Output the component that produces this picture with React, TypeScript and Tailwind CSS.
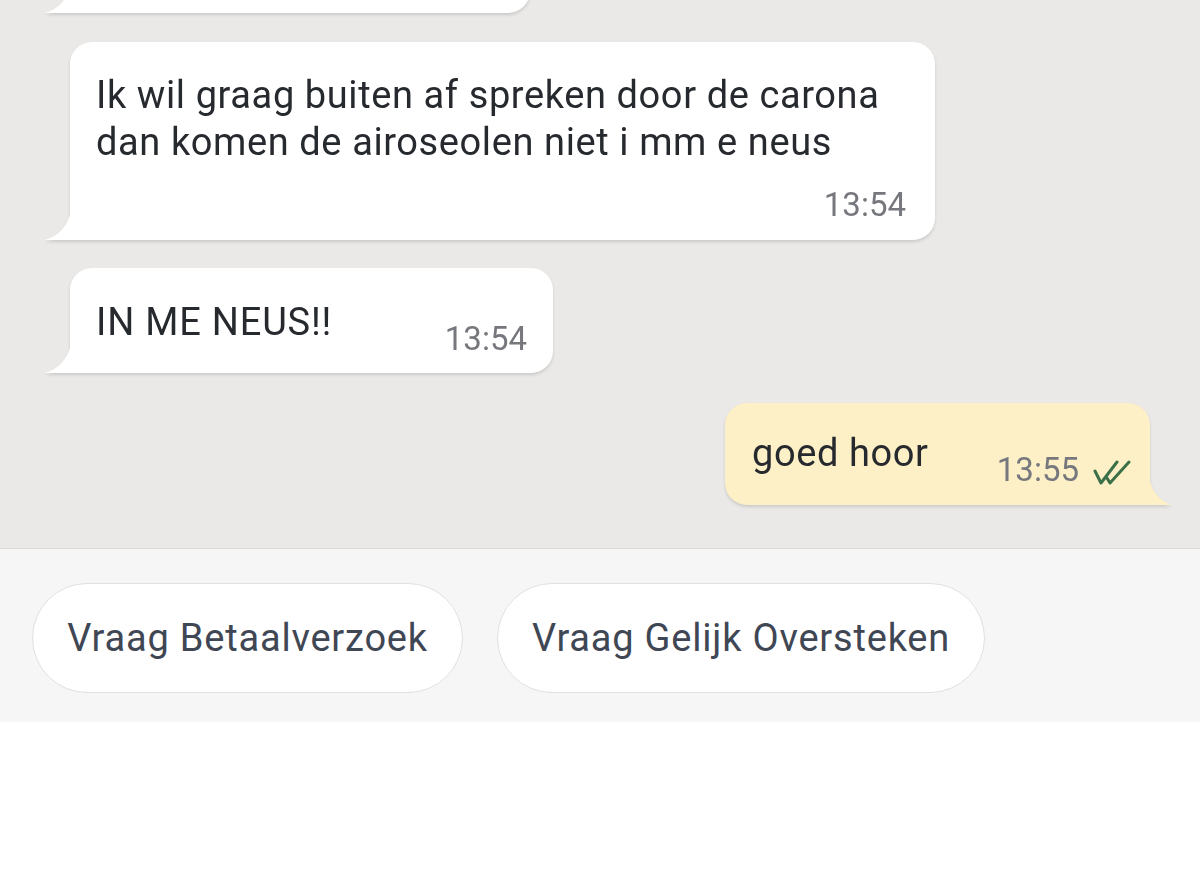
import React from "react";

function InTail() {
  return (
    <svg className="absolute left-[-25px] bottom-0" width="26" height="28" viewBox="0 0 26 28">
      <path d="M0 28 Q 20 22 26 0 L26 28 Z" fill="#ffffff" />
    </svg>
  );
}

function OutTail() {
  return (
    <svg className="absolute right-[-22px] bottom-0" width="23" height="28" viewBox="0 0 23 28">
      <path d="M23 28 Q 4 22 0 0 L0 28 Z" fill="#fdf0c6" />
    </svg>
  );
}

function DoubleCheck() {
  return (
    <svg width="40" height="26" viewBox="0 0 40 26" fill="none" stroke="#3b7049" strokeWidth="3" strokeLinecap="round" strokeLinejoin="round">
      <path d="M3 11 L9 23 L25 2" />
      <path d="M15 18 L18 23 L37 2" />
    </svg>
  );
}

export default function App() {
  return (
    <div className="w-[1200px] h-[884px] flex flex-col bg-white font-['Roboto',_'Liberation_Sans',_sans-serif] overflow-hidden">
      <div className="h-[548px] bg-[#ebe9e7] flex flex-col overflow-hidden">
        {/* partially visible top bubble */}
        <div className="mt-[-67px] ml-[70px] w-[460px] h-[80px] relative drop-shadow-[0_2px_1.5px_rgba(0,0,0,0.13)]">
          <div className="absolute inset-0 bg-white rounded-[22px] rounded-bl-none" />
          <InTail />
        </div>

        {/* bubble 2 */}
        <div className="mt-[29px] ml-[70px] w-[865px] h-[198px] relative drop-shadow-[0_2px_1.5px_rgba(0,0,0,0.13)]">
          <div className="absolute inset-0 bg-white rounded-[22px] rounded-bl-none" />
          <InTail />
          <div className="relative h-full flex flex-col pl-[26px] pr-[29px] pt-[30px] pb-[17px]">
            <p className="text-[38px] leading-[47px] tracking-[0.6px] text-[#26292e]">
              Ik wil graag buiten af spreken door de carona
              <br />
              dan komen de airoseolen niet i mm e neus
            </p>
            <span className="mt-auto self-end text-[33px] leading-[36px] text-[#76787d]">13:54</span>
          </div>
        </div>

        {/* bubble 3 */}
        <div className="mt-[28px] ml-[70px] w-[483px] h-[105px] relative drop-shadow-[0_2px_1.5px_rgba(0,0,0,0.13)]">
          <div className="absolute inset-0 bg-white rounded-[22px] rounded-bl-none" />
          <InTail />
          <div className="relative h-full flex justify-between pl-[26px] pr-[26px] pt-[31px] pb-[16px]">
            <span className="self-start text-[38px] leading-[47px] tracking-[0.8px] text-[#26292e]">IN ME NEUS!!</span>
            <span className="self-end text-[33px] leading-[36px] text-[#76787d]">13:54</span>
          </div>
        </div>

        {/* outgoing bubble */}
        <div className="mt-[30px] ml-[725px] w-[425px] h-[102px] relative drop-shadow-[0_2px_1.5px_rgba(0,0,0,0.13)]">
          <div className="absolute inset-0 bg-[#fdf0c6] rounded-[22px] rounded-br-none" />
          <OutTail />
          <div className="relative h-full flex pl-[27px] pr-[18px] pt-[27px] pb-[17px]">
            <span className="self-start text-[38px] leading-[47px] tracking-[0.6px] text-[#26292e]">goed hoor</span>
            <div className="ml-auto self-end flex items-end gap-[13px]">
              <span className="text-[33px] leading-[36px] text-[#76787d]">13:55</span>
              <div className="mb-[2px]">
                <DoubleCheck />
              </div>
            </div>
          </div>
        </div>
      </div>

      <div className="h-px bg-[#dcdbda]" />

      <div className="h-[173px] bg-[#f7f6f6] flex items-start gap-[34px] pl-[32px] pt-[34px]">
        <button className="w-[431px] h-[110px] rounded-full bg-white border border-[#e1e0e0] flex items-center justify-center text-[38px] tracking-[0.8px] text-[#3f4654] whitespace-nowrap">
          Vraag Betaalverzoek
        </button>
        <button className="w-[488px] h-[110px] rounded-full bg-white border border-[#e1e0e0] flex items-center justify-center text-[38px] tracking-[0.8px] text-[#3f4654] whitespace-nowrap">
          Vraag Gelijk Oversteken
        </button>
      </div>

      <div className="flex-1 bg-white" />
    </div>
  );
}
